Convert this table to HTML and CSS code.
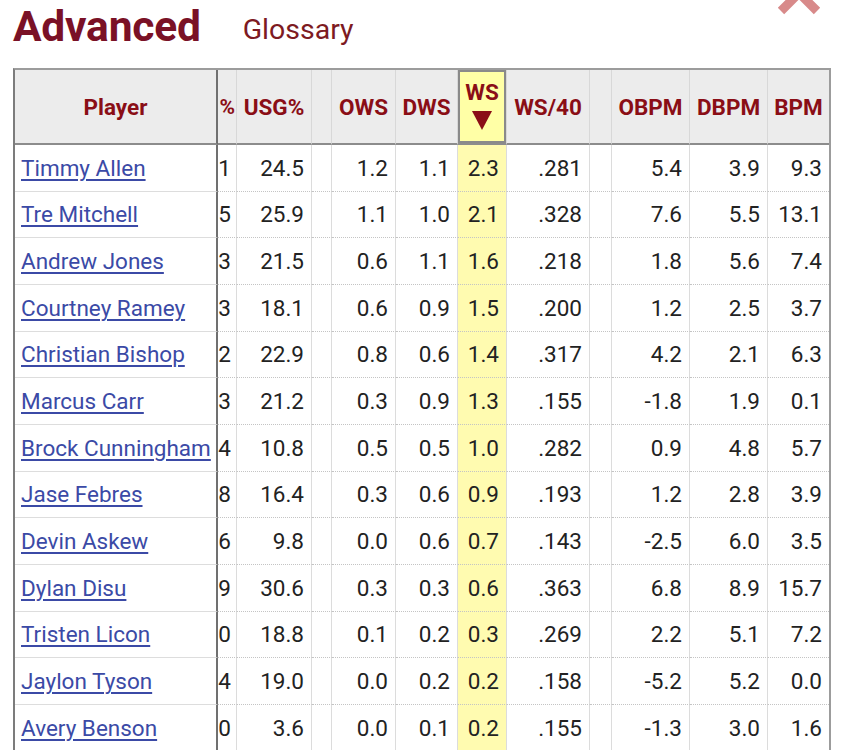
FILE: index.html
```html
<!DOCTYPE html>
<html lang="en">
<head>
<meta charset="utf-8">
<title>Advanced</title>
<link rel="stylesheet" href="styles.css">
</head>
<body>
<div class="page">
  <button class="close" aria-label="Close">
    <svg width="46" height="46" viewBox="0 0 46 46"><path d="M5 5 L41 41 M41 5 L5 41" stroke="#d88a8a" stroke-width="9" stroke-linecap="butt" fill="none"/></svg>
  </button>
  <div class="head">
    <h2 class="title">Advanced</h2>
    <a class="glossary" href="#">Glossary</a>
  </div>
  <table class="stats">
    <colgroup>
      <col class="c-player"><col class="c-part"><col class="c-usg"><col class="c-sp1"><col class="c-ows"><col class="c-dws"><col class="c-ws"><col class="c-ws40"><col class="c-sp2"><col class="c-obpm"><col class="c-dbpm"><col class="c-bpm">
    </colgroup>
    <thead>
      <tr>
        <th class="player">Player</th>
        <th class="part"><div class="clip">%</div></th>
        <th>USG%</th>
        <th class="sp"></th>
        <th>OWS</th>
        <th>DWS</th>
        <th class="sorted"><span class="ws-label">WS</span><span class="arrow"></span></th>
        <th>WS/40</th>
        <th class="sp"></th>
        <th>OBPM</th>
        <th>DBPM</th>
        <th class="last">BPM</th>
      </tr>
    </thead>
    <tbody>
      <tr><td class="player"><a href="#">Timmy Allen</a></td><td class="part"><div class="clip">1</div></td><td>24.5</td><td class="sp"></td><td>1.2</td><td>1.1</td><td class="sorted">2.3</td><td>.281</td><td class="sp"></td><td>5.4</td><td>3.9</td><td class="last">9.3</td></tr>
      <tr><td class="player"><a href="#">Tre Mitchell</a></td><td class="part"><div class="clip">5</div></td><td>25.9</td><td class="sp"></td><td>1.1</td><td>1.0</td><td class="sorted">2.1</td><td>.328</td><td class="sp"></td><td>7.6</td><td>5.5</td><td class="last">13.1</td></tr>
      <tr><td class="player"><a href="#">Andrew Jones</a></td><td class="part"><div class="clip">3</div></td><td>21.5</td><td class="sp"></td><td>0.6</td><td>1.1</td><td class="sorted">1.6</td><td>.218</td><td class="sp"></td><td>1.8</td><td>5.6</td><td class="last">7.4</td></tr>
      <tr><td class="player"><a href="#">Courtney Ramey</a></td><td class="part"><div class="clip">3</div></td><td>18.1</td><td class="sp"></td><td>0.6</td><td>0.9</td><td class="sorted">1.5</td><td>.200</td><td class="sp"></td><td>1.2</td><td>2.5</td><td class="last">3.7</td></tr>
      <tr><td class="player"><a href="#">Christian Bishop</a></td><td class="part"><div class="clip">2</div></td><td>22.9</td><td class="sp"></td><td>0.8</td><td>0.6</td><td class="sorted">1.4</td><td>.317</td><td class="sp"></td><td>4.2</td><td>2.1</td><td class="last">6.3</td></tr>
      <tr><td class="player"><a href="#">Marcus Carr</a></td><td class="part"><div class="clip">3</div></td><td>21.2</td><td class="sp"></td><td>0.3</td><td>0.9</td><td class="sorted">1.3</td><td>.155</td><td class="sp"></td><td>-1.8</td><td>1.9</td><td class="last">0.1</td></tr>
      <tr><td class="player"><a href="#">Brock Cunningham</a></td><td class="part"><div class="clip">4</div></td><td>10.8</td><td class="sp"></td><td>0.5</td><td>0.5</td><td class="sorted">1.0</td><td>.282</td><td class="sp"></td><td>0.9</td><td>4.8</td><td class="last">5.7</td></tr>
      <tr><td class="player"><a href="#">Jase Febres</a></td><td class="part"><div class="clip">8</div></td><td>16.4</td><td class="sp"></td><td>0.3</td><td>0.6</td><td class="sorted">0.9</td><td>.193</td><td class="sp"></td><td>1.2</td><td>2.8</td><td class="last">3.9</td></tr>
      <tr><td class="player"><a href="#">Devin Askew</a></td><td class="part"><div class="clip">6</div></td><td>9.8</td><td class="sp"></td><td>0.0</td><td>0.6</td><td class="sorted">0.7</td><td>.143</td><td class="sp"></td><td>-2.5</td><td>6.0</td><td class="last">3.5</td></tr>
      <tr><td class="player"><a href="#">Dylan Disu</a></td><td class="part"><div class="clip">9</div></td><td>30.6</td><td class="sp"></td><td>0.3</td><td>0.3</td><td class="sorted">0.6</td><td>.363</td><td class="sp"></td><td>6.8</td><td>8.9</td><td class="last">15.7</td></tr>
      <tr><td class="player"><a href="#">Tristen Licon</a></td><td class="part"><div class="clip">0</div></td><td>18.8</td><td class="sp"></td><td>0.1</td><td>0.2</td><td class="sorted">0.3</td><td>.269</td><td class="sp"></td><td>2.2</td><td>5.1</td><td class="last">7.2</td></tr>
      <tr><td class="player"><a href="#">Jaylon Tyson</a></td><td class="part"><div class="clip">4</div></td><td>19.0</td><td class="sp"></td><td>0.0</td><td>0.2</td><td class="sorted">0.2</td><td>.158</td><td class="sp"></td><td>-5.2</td><td>5.2</td><td class="last">0.0</td></tr>
      <tr><td class="player"><a href="#">Avery Benson</a></td><td class="part"><div class="clip">0</div></td><td>3.6</td><td class="sp"></td><td>0.0</td><td>0.1</td><td class="sorted">0.2</td><td>.155</td><td class="sp"></td><td>-1.3</td><td>3.0</td><td class="last">1.6</td></tr>
    </tbody>
  </table>
</div>
</body>
</html>
```

FILE: styles.css
```css
html, body {
  margin: 0;
  padding: 0;
  background: #ffffff;
}

.page {
  position: relative;
  width: 843px;
  height: 750px;
  overflow: hidden;
  font-family: Roboto, "Noto Sans", sans-serif;
}

.close {
  position: absolute;
  left: 776px;
  top: -30px;
  width: 46px;
  height: 46px;
  padding: 0;
  border: 0;
  background: transparent;
}

.close svg {
  display: block;
}

.head {
  display: flex;
  align-items: baseline;
  height: 68px;
  padding-left: 13px;
  box-sizing: border-box;
}

.title {
  margin: 0;
  font-size: 42.5px;
  line-height: 54px;
  font-weight: 700;
  color: #7a1126;
  letter-spacing: -0.2px;
}

.glossary {
  margin-left: 42px;
  font-size: 28.5px;
  color: #7d1a22;
  text-decoration: none;
  position: relative;
  top: -2px;
}

.stats {
  margin-left: 13px;
  width: 818px;
  table-layout: fixed;
  border-collapse: separate;
  border-spacing: 0;
  border-top: 2px solid #9c9c9c;
  border-left: 2px solid #7c7c7c;
  border-right: 2px solid #9c9c9c;
}

.c-player { width: 203px; }
.c-part { width: 19px; }
.c-usg { width: 75px; }
.c-sp1 { width: 20px; }
.c-ows { width: 64px; }
.c-dws { width: 62px; }
.c-ws { width: 49px; }
.c-ws40 { width: 83px; }
.c-sp2 { width: 22px; }
.c-obpm { width: 78px; }
.c-dbpm { width: 78px; }
.c-bpm { width: 61px; }

.stats th {
  height: 75px;
  padding: 0;
  box-sizing: border-box;
  background: #ececec;
  color: #8a0e16;
  font-size: 22.5px;
  font-weight: 700;
  text-align: center;
  vertical-align: middle;
  border-right: 1px solid #d8d8d8;
  border-bottom: 2px solid #8c8c8c;
  white-space: nowrap;
}

.stats td {
  height: 46.67px;
  padding: 0 7px 0 0;
  box-sizing: border-box;
  font-size: 22.5px;
  color: #222222;
  text-align: right;
  vertical-align: middle;
  border-right: 1px solid #dcdcdc;
  border-bottom: 1px dotted #c4c4c4;
  white-space: nowrap;
}

.stats .last {
  border-right: 0;
}

.stats th.player,
.stats td.player {
  border-right: 2px solid #707070;
}

.stats td.player {
  text-align: left;
  padding: 0 0 0 6px;
  border-bottom: 1px solid #dddddd;
  overflow: hidden;
}

.stats td.player a {
  color: #3b4aa6;
  text-decoration: underline;
  text-decoration-thickness: 1.5px;
  text-underline-offset: 3px;
}

.stats td.part {
  padding: 0 5px 0 0;
}

.stats th.part {
  padding: 0 1px 0 0;
  font-size: 21px;
}

.clip {
  display: flex;
  justify-content: flex-end;
  overflow: hidden;
}

.stats th.sorted {
  background: #ffffa6;
  box-shadow: inset 0 0 0 2px #8a8a8a;
  vertical-align: top;
  padding-top: 10px;
}

.ws-label {
  display: block;
  line-height: 24px;
}

.arrow {
  display: block;
  width: 0;
  height: 0;
  margin: 7px auto 0;
  border-left: 10px solid transparent;
  border-right: 10px solid transparent;
  border-top: 19px solid #8a0e16;
}

.stats td.sorted {
  background: #fffbb0;
}
```
